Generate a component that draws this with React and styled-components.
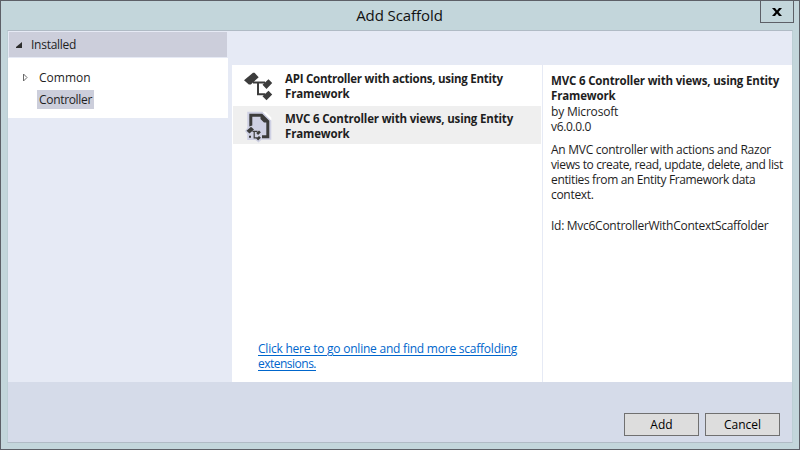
import React from 'react';
import styled, { createGlobalStyle } from 'styled-components';

const GlobalStyle = createGlobalStyle`
  * { box-sizing: border-box; }
  body { margin: 0; overflow: hidden; font: 12px/15px "Open Sans", "Noto Sans", sans-serif; color: #1e1e1e; }
  button { font: inherit; color: #000; padding: 0; border-radius: 0; }
  svg { display: block; overflow: visible; }
`;

const Dialog = styled.main`
  width: 800px;
  height: 450px;
  display: flex;
  flex-direction: column;
  background: #c3d6db;
  border: 1px solid #5d6067;
  padding: 0 6px 6px;
  position: relative;
`;
const TitleBar = styled.header`
  height: 29px;
  flex: none;
  padding-right: 1px;
  text-align: center;
  font-size: 15px;
  line-height: 29px;
  letter-spacing: -0.08px;
  color: #111;
`;
const CloseButton = styled.button`
  position: absolute;
  top: -1px;
  right: 5px;
  width: 34px;
  height: 23px;
  display: grid;
  place-items: center;
  background: transparent;
  border: 1px solid #5d6067;
`;
const Client = styled.section`
  flex: 1;
  display: flex;
  flex-direction: column;
  background: #e6eaf5;
  border: 1px solid #b0bbc5;
  border-left-color: #bccfd5;
  border-right-color: #bccfd5;
`;
const Body = styled.div`
  height: 351px;
  display: grid;
  grid-template-columns: 220px 560px;
  column-gap: 4px;
  width: 784px;
`;
const Sidebar = styled.nav`
  display: flex;
  flex-direction: column;
`;
const GroupHeader = styled.div`
  height: 25px;
  margin: 1px;
  padding-left: 7px;
  display: flex;
  align-items: center;
  gap: 9px;
  background: #cccedb;
`;
const Tree = styled.div`
  height: 60px;
  background: #fff;
  padding: 10px 0 0 14px;
`;
const TreeItem = styled.div`
  display: flex;
  align-items: center;
  gap: 8px;
  height: 19px;
  margin-bottom: 3px;
`;
const ItemLabel = styled.span`
  height: 19px;
  display: flex;
  align-items: center;
  padding: 0 2px;
  background: ${p => (p.$selected ? '#cccedb' : 'transparent')};
`;
const ArrowSlot = styled.span`
  width: 7px;
  display: flex;
`;
const Content = styled.div`
  margin-top: 34px;
  height: 317px;
  display: flex;
  background: #fff;
`;
const ListPane = styled.div`
  width: 311px;
  flex: none;
  border-right: 1px solid #e6eaf5;
  display: flex;
  flex-direction: column;
  padding: 1px 1px 11px;
`;
const TemplateItem = styled.div`
  height: ${p => (p.$selected ? 38 : 40)}px;
  display: flex;
  padding: 5px 0 0 12px;
  gap: 12px;
  background: ${p => (p.$selected ? '#efefef' : 'transparent')};
`;
const IconSlot = styled.span`
  width: 28px;
  height: 30px;
  flex: none;
`;
const Link = styled.a`
  margin: auto 0 0 25px;
  color: #0066cc;
  text-decoration: underline;
  text-underline-offset: 2px;
`;
const Details = styled.div`
  flex: 1;
  padding: 8px 0 0 8px;
`;
const Paragraph = styled.div`
  margin-top: ${p => p.$gap || 0}px;
`;
const Line = styled.span`
  display: block;
  width: max-content;
  white-space: pre;
  font-weight: ${p => (p.$bold ? 700 : 400)};
  font-size: ${p => (p.$bold ? 11.5 : 12)}px;
  line-height: 15px;
  letter-spacing: ${p => p.$track || 0}px;
`;
const Footer = styled.footer`
  flex: 1;
  display: flex;
  justify-content: flex-end;
  gap: 6px;
  padding: 31px 12px 0 0;
  background: #d5dbe9;
`;
const Button = styled.button`
  width: 75px;
  height: 23px;
  display: grid;
  place-items: center;
  background: #ddd;
  border: 1px solid #707070;
`;

const ApiIcon = () => (
  <svg width="28" height="30" viewBox="0 0 28 30" fill="#3c3c3c">
    <path d="M-1 9.300 8 1.700H9.500L13.700 6.200 5.800 13.500H3.800Z" />
    <path d="M8 10.500H20v2H14v9.800h6v2H12V12.500H8Z" />
    <path d="M17.500 13.800 23.500 8.300 27.200 12.100 21.500 17.900ZM17.500 25.200 23.500 19.700 27.200 23.500 21.500 29.300Z" />
  </svg>
);
const ViewsIcon = () => (
  <svg width="28" height="30" viewBox="0 0 28 30">
    <path fill="#cfd1e4" d="M2.300.7H17.500L26.300 9.500V28.700H16.500L13.500 31.500 10.500 29H2.300V23L0 20 2.300 17Z" />
    <path fill="#fff" d="M17.500.7H20.500L26.300 6.500V9.500Z" />
    <g fill="#3c3c3c">
      <path d="M4.300 2.700H17.200L24.300 9.800V27.300H17V24.300H21.300V11.500H19L15.500 8V5.700H7.300V14.500L4.300 15.500Z" />
      <path d="M1.500 19.700 6 15.700 9 18.500 4.500 22.500Z" />
      <path d="M7.500 19.800H12.500V21H9.800V26.300H12.500V27.500H8.600V21H7.500ZM4 24.700H6V26.700H4Z" />
      <path d="M11.200 22 14 19.500 15.900 21.200 13.100 23.900ZM11.200 27.600 14 25.100 15.900 26.800 13.100 29.500Z" />
    </g>
  </svg>
);

export default function App() {
  return (
    <>
      <GlobalStyle />
      <Dialog>
        <TitleBar>Add Scaffold</TitleBar>
        <CloseButton aria-label="Close">
          <svg width="10" height="8" viewBox="0 0 10 8">
            <path d="M0 0h3l2 2.500L7 0h3L6.500 4 10 8H7L5 5.500 3 8H0l3.500-4Z" fill="#000" />
          </svg>
        </CloseButton>
        <Client>
          <Body>
            <Sidebar>
              <GroupHeader>
                <svg width="6" height="6"><path d="M6 0v6H0v-1Z" fill="#2d2d2d" /></svg>
                <Line $track={-0.26}>Installed</Line>
              </GroupHeader>
              <Tree>
                <TreeItem>
                  <ArrowSlot>
                    <svg width="6" height="9"><path d="M1.500 1v7L5 4.500Z" fill="#fff" stroke="#6a6a6a" /></svg>
                  </ArrowSlot>
                  <ItemLabel><Line>Common</Line></ItemLabel>
                </TreeItem>
                <TreeItem>
                  <ArrowSlot />
                  <ItemLabel $selected><Line $track={-0.32}>Controller</Line></ItemLabel>
                </TreeItem>
              </Tree>
            </Sidebar>
            <Content>
              <ListPane>
                <TemplateItem>
                  <IconSlot><ApiIcon /></IconSlot>
                  <div>
                    <Line $bold $track={-0.25}>API Controller with actions, using Entity</Line>
                    <Line $bold $track={-0.15}>Framework</Line>
                  </div>
                </TemplateItem>
                <TemplateItem $selected>
                  <IconSlot><ViewsIcon /></IconSlot>
                  <div>
                    <Line $bold $track={-0.17}>MVC 6 Controller with views, using Entity</Line>
                    <Line $bold $track={-0.15}>Framework</Line>
                  </div>
                </TemplateItem>
                <Link>
                  <Line $track={-0.227}>Click here to go online and find more scaffolding</Line>
                  <Line $track={-0.51}>extensions.</Line>
                </Link>
              </ListPane>
              <Details>
                <Line $bold $track={-0.17}>MVC 6 Controller with views, using Entity</Line>
                <Line $bold $track={-0.15}>Framework</Line>
                <Paragraph $gap={1}>
                  <Line $track={-0.19}>by Microsoft</Line>
                  <Line $track={-0.36}>v6.0.0.0</Line>
                </Paragraph>
                <Paragraph $gap={8}>
                  <Line $track={-0.27}>An MVC controller with actions and Razor</Line>
                  <Line $track={-0.37}>views to create, read, update, delete, and list</Line>
                  <Line $track={-0.36}>entities from an Entity Framework data</Line>
                  <Line $track={-0.3}>context.</Line>
                </Paragraph>
                <Paragraph $gap={16}>
                  <Line $track={-0.28}>Id: Mvc6ControllerWithContextScaffolder</Line>
                </Paragraph>
              </Details>
            </Content>
          </Body>
          <Footer>
            <Button><Line>Add</Line></Button>
            <Button><Line>Cancel</Line></Button>
          </Footer>
        </Client>
      </Dialog>
    </>
  );
}
